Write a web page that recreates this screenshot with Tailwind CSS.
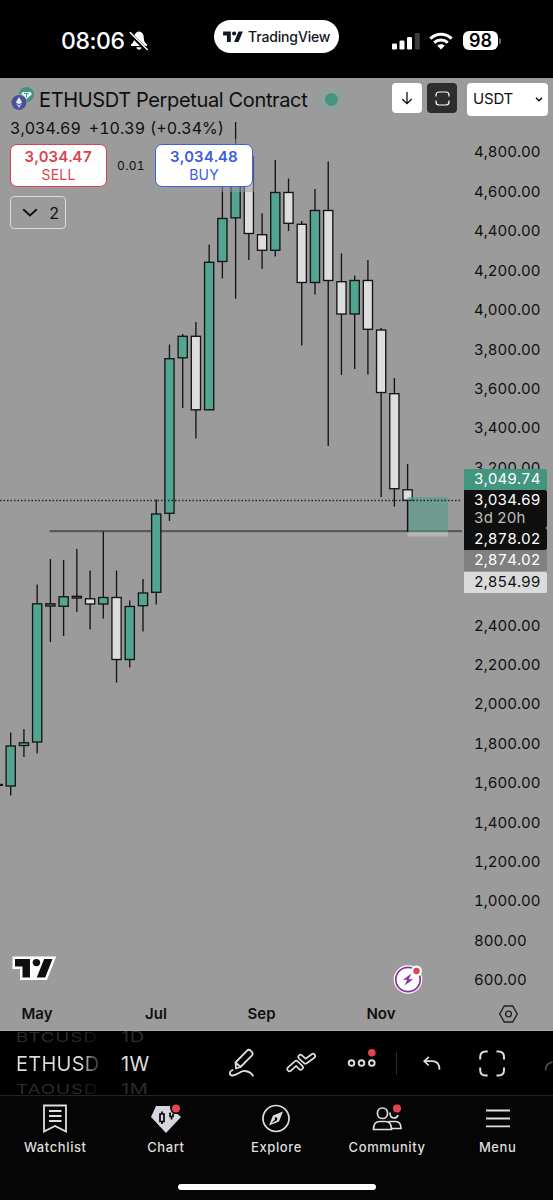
<!DOCTYPE html>
<html lang="en">
  <head>
    <meta charset="UTF-8" />
    <meta name="viewport" content="width=device-width, initial-scale=1.0" />
    <script src="https://cdn.jsdelivr.net/npm/@tailwindcss/browser@4"></script>
    <title>ETHUSDT Perpetual Contract</title>
  </head>
  <body class="bg-black font-['Inter','Liberation_Sans',sans-serif]">
    <div class="flex flex-col w-[553px] h-[1200px] overflow-hidden whitespace-nowrap">
      <!-- Status bar -->
      <header class="relative flex items-center h-[78px] shrink-0 text-white pt-1">
        <span class="ml-[61px] w-[66px] text-[23px] leading-7 font-medium tracking-[-0.4px]">08:06</span>
        <svg class="ml-[2px] w-5 h-5" viewBox="0 0 20 20">
          <path d="M10 .5C6.600 1 5.200 3.500 5.200 7c0 3-1 4.700-3.200 6.500V15h16v-1.500c-2.200-1.800-3.200-3.500-3.200-6.500 0-3.500-1.400-6-4.800-6.500zM7.300 16.300h5.400c-.4 1.600-1.400 2.400-2.700 2.400s-2.300-.8-2.700-2.400z" fill="#fff" />
          <path d="M.8 2.200l17 17" stroke="#000" stroke-width="3.600" />
          <path d="M1.200 1.500l17 17" stroke="#fff" stroke-width="1.500" stroke-linecap="round" />
        </svg>
        <div class="absolute left-[214px] top-5 flex items-center w-[125px] h-[33px] rounded-full bg-white text-[#131722] pl-[9px]">
          <svg class="w-5 h-[11px]" viewBox="0 0 36 20" fill="#131722">
            <path d="M14 20H7V8H0V1h14zM28 20h-8l8-19h8z" />
            <circle cx="20" cy="4.500" r="3.800" />
          </svg>
          <span class="ml-[5px] text-[14px] font-medium tracking-[-0.15px]">TradingView</span>
        </div>
        <div class="absolute left-[392px] top-[31px] flex items-center h-[19px]">
          <svg class="w-7 h-[18px]" viewBox="0 0 28 18" fill="#fff">
            <rect x="0" y="11.500" width="5" height="6" rx="1.300" />
            <rect x="7.500" y="8.500" width="5" height="9" rx="1.300" />
            <rect x="15" y="5" width="5" height="12.500" rx="1.300" />
            <rect x="22.800" y="1" width="5" height="16.500" rx="1.300" fill="#3c3c3c" />
          </svg>
          <svg class="ml-[9px] w-6 h-[18px]" viewBox="0 0 24 18" fill="none" stroke="#fff" stroke-width="3">
            <path d="M1.300 6.700C7.500.8 16.500.8 22.700 6.700M5.200 10.700c4-3.700 9.600-3.700 13.600 0" />
            <path d="M12 17.500l-3.700-3.800c2.200-1.900 5.200-1.900 7.400 0z" fill="#fff" stroke="none" />
          </svg>
          <div class="ml-[10px] flex items-center justify-center w-[35px] h-[19px] rounded-[6px] bg-white text-black text-[18px] leading-none font-semibold">98</div>
          <div class="ml-px w-[2px] h-[6px] rounded-r-full bg-[#666]"></div>
        </div>
      </header>

      <!-- Chart -->
      <main class="relative h-[953px] shrink-0 bg-[#9b9b9b] text-[#0f0f0f]">
        <svg class="absolute inset-0 w-[553px] h-[953px]" viewBox="0 78 553 953">
          <rect x="49.500" y="530" width="412.500" height="2.200" fill="#585858" />
          <g id="candles" stroke="#151515" stroke-width="1.350"></g>
          <rect x="0" y="783.800" width="3" height="2.200" fill="#111" />
          <rect x="407.500" y="497" width="40.500" height="35" fill="#53998a" fill-opacity=".58" />
          <rect x="407.500" y="532" width="40.500" height="4.500" fill="#d6d6d6" fill-opacity=".42" />
          <path d="M407.600 500V532" stroke="#111" stroke-width="1.300" />
          <path d="M0 500.500H462" stroke="#222" stroke-width="1.300" stroke-dasharray="1.500 2" />
        </svg>

        <!-- Price scale -->
        <div id="prices" class="absolute left-[474px] top-[55px] flex flex-col text-[15px] tabular-nums"></div>
        <div class="absolute left-[464px] top-[391px] flex flex-col w-[83px] text-[15px] tabular-nums text-white">
          <div class="flex items-center h-[21px] pl-[10px] bg-[#42957f] rounded-tr-[2px]">3,049.74</div>
          <div class="flex flex-col justify-center h-[38px] pl-[10px] bg-[#0f0f0f] rounded-r-[2px] leading-[18px]">
            <span>3,034.69</span>
            <span class="text-[#bdbdbd]">3d 20h</span>
          </div>
          <div class="flex items-center h-[22px] pl-[10px] bg-[#0f0f0f] rounded-r-[2px]">2,878.02</div>
          <div class="flex items-center h-[21px] pl-[10px] bg-[#808080]">2,874.02</div>
          <div class="flex items-center h-[21px] mt-px pl-[10px] bg-[#dbdbdb] rounded-r-[2px] text-[#111]">2,854.99</div>
        </div>

        <!-- Legend -->
        <div class="absolute left-[9px] top-[61px] w-[246px] h-[53px] bg-[#9b9b9b]/50"></div>
        <div class="relative flex items-start h-[43px]">
          <svg class="ml-[11px] mt-[9px] w-6 h-6" viewBox="0 0 24 24">
            <circle cx="15.500" cy="7.500" r="7.500" fill="#42917f" />
            <path d="M11.500 4.500h8l2 2.800-6 5.200-6-5.200zM13 6.300h5M15.500 6.300v4" fill="#e8f5f2" stroke="#42917f" stroke-width=".9" />
            <circle cx="8" cy="15.500" r="8.300" fill="#9b9b9b" />
            <circle cx="8" cy="15.500" r="7.500" fill="#4a5296" />
            <path d="M8 10l3.200 5.500L8 17.300l-3.200-1.800z" fill="#e4e7fa" />
            <path d="M8 18.300l3-1.700-3 4.500-3-4.500z" fill="#b9c0ee" />
          </svg>
          <h1 class="ml-[4px] mt-[8px] w-[270px] text-[20px] leading-7 tracking-[-0.36px]">ETHUSDT Perpetual Contract</h1>
          <div class="ml-[9px] mt-2 flex items-center justify-center size-[27px] rounded-full bg-[#92a09b]">
            <div class="size-[13px] rounded-full bg-[#42957f]"></div>
          </div>
          <div class="absolute left-[392px] top-[5px] flex">
            <button class="flex items-center justify-center size-[30px] rounded-[4px] bg-white">
              <svg class="w-3 h-[14px]" viewBox="0 0 12 14" fill="none" stroke="#111" stroke-width="1.300"><path d="M6 1v11.500M1.200 8L6 12.700 10.800 8" /></svg>
            </button>
            <button class="ml-[5px] flex items-center justify-center size-[30px] rounded-[4px] bg-[#2d2d2d]">
              <svg class="size-[15px]" viewBox="0 0 15 15" fill="none" stroke="#fff" stroke-width="1.200"><path d="M1 5.500V4a3 3 0 0 1 3-3h7a3 3 0 0 1 3 3v1.500M1 9.500V11a3 3 0 0 0 3 3h7a3 3 0 0 0 3-3V9.500" /></svg>
            </button>
            <button class="ml-[10px] flex items-center justify-between w-[81px] h-[33px] rounded-[4px] bg-white pl-[6px] pr-[5px] text-[15px] tracking-[-0.2px]">
              <span>USDT</span>
              <svg class="w-2 h-[5px]" viewBox="0 0 8 5" fill="none" stroke="#111" stroke-width="1.500"><path d="M1 .8l3 3 3-3" /></svg>
            </button>
          </div>
        </div>
        <div class="relative flex items-center gap-[8px] pl-[10px] h-[14px] text-[16px] tabular-nums">
          <span>3,034.69</span><span>+10.39</span><span class="-ml-[3px]">(+0.34%)</span>
        </div>
        <div class="relative flex items-center mt-[9px] ml-[10px] tabular-nums">
          <button class="flex flex-col items-center justify-center w-[97px] h-[43px] rounded-[7px] border border-[#d9434e] bg-white text-[#d9434e]">
            <span class="text-[15px] leading-[18px] font-semibold tracking-[0.2px]">3,034.47</span>
            <span class="text-[14px] leading-[17px] tracking-[0.2px]">SELL</span>
          </button>
          <span class="w-[48px] text-center text-[12px] tracking-[0.3px]">0.01</span>
          <button class="flex flex-col items-center justify-center w-[98px] h-[43px] rounded-[7px] border border-[#3f5fe0] bg-white text-[#3a5ce0]">
            <span class="text-[15px] leading-[18px] font-semibold tracking-[0.2px]">3,034.48</span>
            <span class="text-[14px] leading-[17px] tracking-[0.2px]">BUY</span>
          </button>
        </div>
        <button class="relative flex items-center justify-between mt-[9px] ml-[10px] w-[56px] h-[33px] rounded-[4px] border border-[#dcdcdc] pl-[11px] pr-[6px] text-[16px]">
          <svg class="w-4 h-[9px]" viewBox="0 0 16 9" fill="none" stroke="#111" stroke-width="1.900"><path d="M1.200 1.200L8 7.500l6.800-6.300" /></svg>
          <span>2</span>
        </button>

        <!-- Logo and news marker -->
        <svg class="absolute left-[12px] top-[877px] w-[46px] h-[26px]" viewBox="0 0 46 26">
          <path d="M3 4H40.500L33.200 22.500H10.500V11.500H3z" fill="#fff" stroke="#fff" stroke-width="5" />
          <path d="M18 22.500H10.500V11.500H3V4h15zM33.200 22.500h-8.500l7.500-18.500h8.300z" fill="#0f0f0f" />
          <circle cx="24.400" cy="7.600" r="3.700" fill="#0f0f0f" />
        </svg>
        <svg class="absolute left-[393px] top-[886px] size-[30px]" viewBox="0 0 30 30">
          <circle cx="15" cy="15.500" r="14.200" fill="#fff" />
          <circle cx="15" cy="15.500" r="12.200" fill="none" stroke="#8532a6" stroke-width="1.700" />
          <circle cx="23.500" cy="7" r="5.500" fill="#fff" />
          <circle cx="23.500" cy="7" r="3.200" fill="#e5434d" />
          <path d="M18.500 9.500L10 15.800h4.300L11.500 21.500l8.700-6.300h-4.500z" fill="#8532a6" />
        </svg>

        <!-- Time scale -->
        <div class="absolute inset-x-0 bottom-0 h-[34px] border-b border-[#aaa] text-[15px] font-semibold">
          <div class="grid grid-cols-[74px_165px_45px_195px_59px] h-full items-center text-center">
            <span class="pt-[2px]">May</span><span class="pt-[2px] pr-px">Jul</span><span class="pt-[2px]">Sep</span><span class="pt-[2px] pr-px">Nov</span>
            <svg class="w-5 h-[18px] ml-[20px]" viewBox="0 0 20 18" fill="none" stroke="#222" stroke-width="1.400"><path d="M5.300 1h8.400L18.300 9l-4.600 8H5.300L.7 9z" /><circle cx="9.500" cy="9" r="2.900" /></svg>
          </div>
        </div>
      </main>

      <!-- Toolbar -->
      <div class="relative flex h-[65px] shrink-0 overflow-hidden bg-black text-[#dedede] border-b border-[#222]">
        <div class="flex flex-col w-[105px] pl-4">
          <div class="h-[14px] flex items-center text-[19px] leading-none"><span class="scale-y-70 -translate-y-px tracking-[0.8px] bg-linear-to-r from-[#2c2c2c] from-75% to-[#111] bg-clip-text text-transparent">BTCUSD</span></div>
          <div class="h-[37px] flex items-center text-[20px] pt-[2px]"><span class="bg-linear-to-r from-[#dedede] from-78% to-[#333] bg-clip-text text-transparent tracking-[0.25px]">ETHUSD</span></div>
          <div class="h-[14px] flex items-center text-[19px] leading-none"><span class="scale-y-70 translate-y-px tracking-[0.8px] bg-linear-to-r from-[#2c2c2c] from-75% to-[#111] bg-clip-text text-transparent">TAOUSD</span></div>
        </div>
        <div class="flex flex-col w-[80px] pl-4">
          <div class="h-[14px] flex items-center text-[20px] leading-none text-[#2c2c2c]"><span class="scale-y-70 -translate-y-px tracking-[0.6px]">1D</span></div>
          <div class="h-[37px] flex items-center text-[20px] tracking-[0.4px] pt-[2px]">1W</div>
          <div class="h-[14px] flex items-center text-[20px] leading-none text-[#2c2c2c]"><span class="scale-y-70 translate-y-px tracking-[0.6px]">1M</span></div>
        </div>
        <svg class="ml-[44px] mt-[17px] w-7 h-[30px]" viewBox="0 0 28 30" fill="none" stroke="#dedede" stroke-width="1.800" stroke-linecap="round" stroke-linejoin="round">
          <path d="M7 20.500l-.5-6L17.800 2.800c1.200-1.200 2.800-1.200 4 0l1 1c1.200 1.200 1.200 2.600 0 3.800L11.500 19zM6.500 14.500l5 4.500" />
          <path d="M3.500 22C0 23.500 0 27.500 3.500 27.500c4.500 0 8-5 12.500-4.500 3.500.3 6 1.700 8 4.700" />
        </svg>
        <svg class="ml-[29px] mt-[20px] w-[30px] h-[24px]" viewBox="0 0 30 24" fill="none" stroke-linejoin="round" stroke-linecap="round">
          <path d="M3.500 18L10.200 12 14.800 16.500M14.500 6L19.500 10.500 27 5" stroke="#dedede" stroke-width="6" />
          <path d="M3.500 18L10.200 12 14.800 16.500M14.500 6L19.500 10.500 27 5" stroke="#000" stroke-width="2.700" />
        </svg>
        <svg class="ml-[31px] mt-[17px] w-[30px] h-[22px]" viewBox="0 0 30 22" fill="none" stroke="#dedede" stroke-width="1.900">
          <circle cx="4.500" cy="15" r="2.800" /><circle cx="14.500" cy="15" r="2.800" /><circle cx="24.800" cy="15" r="2.800" />
          <circle cx="24.800" cy="4.800" r="3.800" fill="#e5434d" stroke="none" />
        </svg>
        <div class="ml-[19px] mt-[21px] w-px h-[23px] bg-[#2a2a2a]"></div>
        <svg class="ml-[26px] mt-[25px] w-[18px] h-[16px]" viewBox="0 0 18 16" fill="none" stroke="#dedede" stroke-width="1.700"><path d="M5.800 1L1.200 5.200l4.600 4.300M1.500 5.200H9c5 0 7.500 2.500 7.500 8.500" /></svg>
        <svg class="ml-[38px] mt-[19px] w-[26px] h-[27px]" viewBox="0 0 26 27" fill="none" stroke="#dedede" stroke-width="2"><path d="M1.200 9.500V7c0-3.500 2-5.500 5.500-5.500h2M17.500 1.500h2c3.500 0 5.500 2 5.500 5.500v2.500M25 17.500V20c0 3.500-2 5.500-5.500 5.500h-2M8.700 25.500h-2c-3.500 0-5.500-2-5.500-5.500v-2.500" /></svg>
        <svg class="ml-[39px] mt-[29px] w-[9px] h-[12px]" viewBox="0 0 9 12" fill="none" stroke="#555" stroke-width="1.600"><path d="M1.500 10.500c0-5 2-7.500 7-8.500" /></svg>
      </div>

      <!-- Tab bar -->
      <nav class="relative grid grid-cols-5 flex-1 bg-[#050505] text-[#dedede] text-[13px] font-medium tracking-[0.6px]">
        <div class="flex flex-col items-center pt-[8px]">
          <svg class="w-6 h-[29px]" viewBox="0 0 24 29" fill="none" stroke="#dedede" stroke-width="1.800"><path d="M1 1.500h22v26L12 22 1 27.500zM6 7h12.500M6 12h12.500M6 17h12.500" /></svg>
          <span class="mt-[4px] leading-5">Watchlist</span>
        </div>
        <div class="flex flex-col items-center pt-[8px]">
          <svg class="w-[30px] h-[29px]" viewBox="0 0 30 29">
            <path d="M5 2h14c0 5 3 8 7.500 8l3.500 3L15 29 0 13z" fill="#d5d7dd" />
            <path d="M9 10h4v7.500H9zM11 7.500V10M11 17.500v2.500M19 8.500v4h3v-3M20.500 12.500v3" fill="none" stroke="#050505" stroke-width="1.700" />
            <circle cx="25" cy="4.500" r="5.500" fill="#050505" />
            <circle cx="25" cy="4.500" r="4" fill="#e5434d" />
          </svg>
          <span class="mt-[4px] leading-5">Chart</span>
        </div>
        <div class="flex flex-col items-center pt-[8px]">
          <svg class="w-[28px] h-[29px]" viewBox="0 0 28 29"><circle cx="14" cy="14.500" r="13" fill="none" stroke="#dedede" stroke-width="1.700" /><path d="M21 7.500L17 17.500 7 21.500 11 11.500z" fill="#dedede" /><path d="M9 19.500l5-5 1.500 1.500z" fill="#050505" /><circle cx="14" cy="14.500" r="1.300" fill="#050505" /></svg>
          <span class="mt-[4px] leading-5">Explore</span>
        </div>
        <div class="flex flex-col items-center pt-[8px]">
          <svg class="w-[30px] h-[29px]" viewBox="0 0 30 29" fill="none" stroke="#dedede" stroke-width="1.700">
            <rect x="5.500" y="4" width="10" height="10.500" rx="4.800" />
            <path d="M18 8.500c0 3.500 1.500 5.500 4 5.500 2 0 3.500-1 4-3" />
            <path d="M1.500 25.500c0-5.500 2-8 6-8h6c4 0 6 2.500 6 8zM16.500 17.500h7c4 0 5.500 2.500 5.500 7h-9" />
            <circle cx="25" cy="4.500" r="4" fill="#e5434d" stroke="none" />
          </svg>
          <span class="mt-[4px] leading-5">Community</span>
        </div>
        <div class="flex flex-col items-center pt-[8px]">
          <svg class="w-6 h-[29px]" viewBox="0 0 24 29" stroke="#dedede" stroke-width="1.800"><path d="M0 6.500h24M0 14.500h24M0 22.300h24" /></svg>
          <span class="mt-[4px] leading-5">Menu</span>
        </div>
        <div class="absolute left-[178px] bottom-[10px] w-[198px] h-[6px] rounded-full bg-white"></div>
      </nav>
    </div>
  </body>
  <script type="text/javascript">
    const GREEN = "#52a691";
    const WHITE = "#dddddd";
    const DOJI = "#6f6f6f";

    // high, body top, body bottom, low, fill
    const candles = [
      [732.5, 746, 786, 795.5, GREEN],
      [729, 742.8, 745.5, 757, GREEN],
      [584.5, 603.8, 742, 753.5, GREEN],
      [559, 603.8, 606, 642, DOJI],
      [560, 596.8, 606.3, 636, GREEN],
      [549, 596.3, 598, 612, DOJI],
      [570.5, 598.8, 604, 629.5, WHITE],
      [531.5, 597.5, 604, 618.5, GREEN],
      [570.5, 597.5, 659.5, 682.5, WHITE],
      [600.5, 606.5, 659.5, 667.5, GREEN],
      [579, 593, 605.7, 631.5, GREEN],
      [499.5, 514, 592.3, 604.5, GREEN],
      [344.5, 358.7, 513.3, 521, GREEN],
      [334, 336.3, 357.8, 408, GREEN],
      [322, 336.3, 409.8, 438.5, WHITE],
      [244.5, 262.3, 409.8, 410, GREEN],
      [180, 218.5, 261.5, 278.5, GREEN],
      [122, 160, 217.8, 298.7, GREEN],
      [157, 157, 233.5, 260, WHITE],
      [213.3, 234.7, 250.3, 269, WHITE],
      [160, 192.5, 250.3, 256.5, GREEN],
      [178.5, 192.5, 223.3, 231, WHITE],
      [221, 224.3, 282.5, 345.5, WHITE],
      [189, 210.5, 282.5, 294.5, GREEN],
      [161.5, 210.5, 280.5, 446, WHITE],
      [253.5, 281.7, 314, 375, WHITE],
      [275.5, 280.5, 314, 369, GREEN],
      [260, 280.5, 329.3, 374.5, WHITE],
      [328, 330, 392.5, 497, WHITE],
      [378, 393.7, 488.7, 506.5, WHITE],
      [464, 489.8, 500.3, 532, WHITE],
    ];

    document.getElementById("candles").innerHTML = candles
      .map(([high, top, bottom, low, fill], i) => {
        const x = 10.7 + i * 13.23;
        return (
          `<path d="M${x} ${high}V${low}" />` +
          `<rect x="${x - 4.6}" y="${top}" width="9.2" height="${bottom - top}" fill="${fill}" />`
        );
      })
      .join("");

    // 3,000 to 2,600 sit under the price tags and stay blank
    let rows = "";
    for (let price = 4800; price >= 600; price -= 200) {
      const hidden = price <= 3000 && price >= 2600;
      const label = price.toLocaleString("en-US") + ".00";
      rows += `<div class="h-[39.43px] flex items-center">${hidden ? "" : label}</div>`;
    }
    document.getElementById("prices").innerHTML = rows;
  </script>
</html>
